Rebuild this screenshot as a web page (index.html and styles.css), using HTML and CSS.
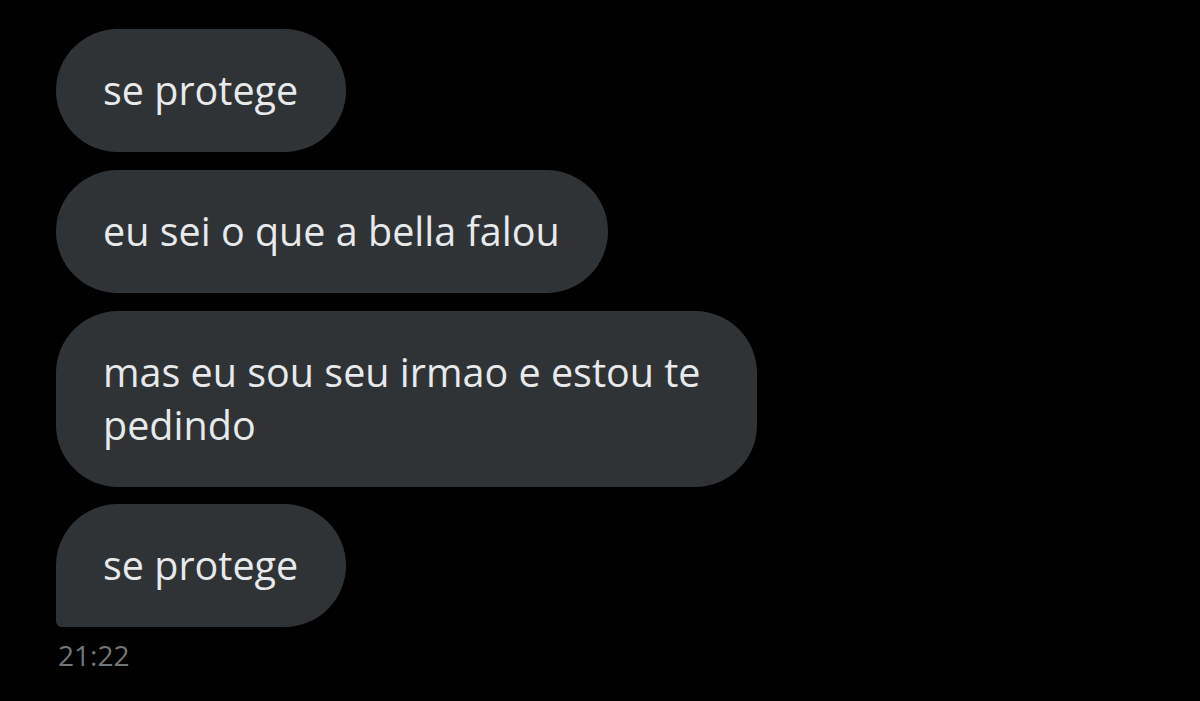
FILE: index.html
```html
<!DOCTYPE html>
<html lang="pt">
<head>
<meta charset="utf-8">
<title>DM</title>
<link rel="stylesheet" href="styles.css">
</head>
<body>
<div class="thread">
  <div class="bubble">se protege</div>
  <div class="bubble">eu sei o que a bella falou</div>
  <div class="bubble wide">mas eu sou seu irmao e estou te pedindo</div>
  <div class="bubble last">se protege</div>
  <div class="time">21:22</div>
</div>
</body>
</html>
```
FILE: styles.css
```css
html, body {
  margin: 0;
  background: #000;
}
body {
  width: 1200px;
  height: 701px;
  overflow: hidden;
  font-family: "Open Sans", "Liberation Sans", sans-serif;
}
.thread {
  display: flex;
  flex-direction: column;
  align-items: flex-start;
  gap: 18px;
  padding: 29px 0 0 56px;
}
.bubble {
  box-sizing: border-box;
  max-width: 701px;
  background: #2f3336;
  color: #e7e9ea;
  font-size: 39.5px;
  line-height: 53px;
  padding: 35px 48px 35px 47px;
  border-radius: 62px;
}
.bubble.last {
  margin-top: -1px;
  border-bottom-left-radius: 6px;
}
.time {
  margin-top: -8px;
  padding-left: 2px;
  color: #71767b;
  font-size: 28px;
  line-height: 36px;
}
```
